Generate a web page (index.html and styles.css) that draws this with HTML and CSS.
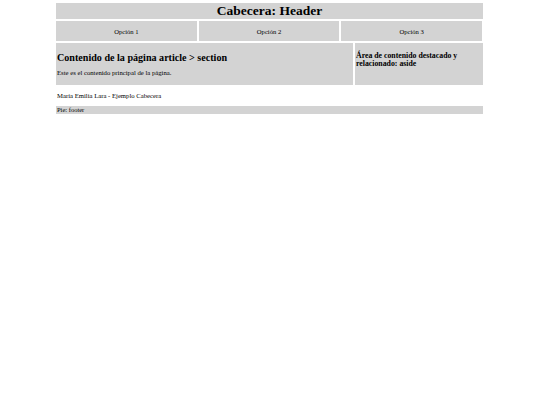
FILE: index.html
```html
<!DOCTYPE html>
<html lang="es">
<head>
<meta charset="utf-8">
<title>Ejemplo Cabecera</title>
<link rel="stylesheet" href="styles.css">
</head>
<body>
<div class="page">
  <header class="header"><h1 class="title">Cabecera: Header</h1></header>
  <nav class="nav">
    <a class="nav-item">Opción 1</a>
    <a class="nav-item">Opción 2</a>
    <a class="nav-item">Opción 3</a>
  </nav>
  <div class="main">
    <article class="article">
      <section class="section">
        <h2 class="section-title">Contenido de la página article &gt; section</h2>
        <p class="text">Este es el contenido principal de la página.</p>
      </section>
    </article>
    <aside class="aside"><h3 class="aside-title">Área de contenido destacado y relacionado: aside</h3></aside>
  </div>
  <p class="author">María Emilia Lara - Ejemplo Cabecera</p>
  <footer class="footer">Pie: footer</footer>
</div>
</body>
</html>
```

FILE: styles.css
```css
html, body {
  margin: 0;
  padding: 0;
  background: #fff;
}
body {
  font-family: "Liberation Serif", "Times New Roman", serif;
  color: #000;
}
.page {
  width: 427px;
  margin: 3px 0 0 56px;
  display: flex;
  flex-direction: column;
}
.header {
  background: #d3d3d3;
  height: 16px;
  display: flex;
  align-items: center;
  justify-content: center;
}
.title {
  margin: 0;
  font-size: 13.5px;
  font-weight: bold;
  line-height: 16px;
}
.nav {
  display: flex;
  gap: 2px;
  margin-top: 2px;
  width: 426px;
}
.nav-item {
  flex: 1;
  background: #d3d3d3;
  height: 20px;
  display: flex;
  align-items: center;
  justify-content: center;
  font-size: 6.6px;
}
.main {
  display: flex;
  gap: 2px;
  margin-top: 2px;
  height: 41.5px;
}
.article {
  width: 297px;
  background: #d3d3d3;
}
.section {
  padding: 0 1px;
}
.section-title {
  margin: 9px 0 0;
  font-size: 10.1px;
  font-weight: bold;
  line-height: 11px;
}
.text {
  margin: 6.4px 0 0;
  font-size: 6.7px;
  line-height: 8px;
}
.aside {
  flex: 1;
  background: #d3d3d3;
  padding: 0 1px;
}
.aside-title {
  margin: 9.2px 0 0;
  font-size: 7.8px;
  font-weight: bold;
  line-height: 7.8px;
}
.author {
  margin: 7.5px 1px 0;
  font-size: 6.7px;
  line-height: 8px;
}
.footer {
  margin-top: 6.3px;
  background: #d3d3d3;
  height: 7.4px;
  font-size: 6.5px;
  line-height: 7.4px;
  padding-left: 1px;
}
```
